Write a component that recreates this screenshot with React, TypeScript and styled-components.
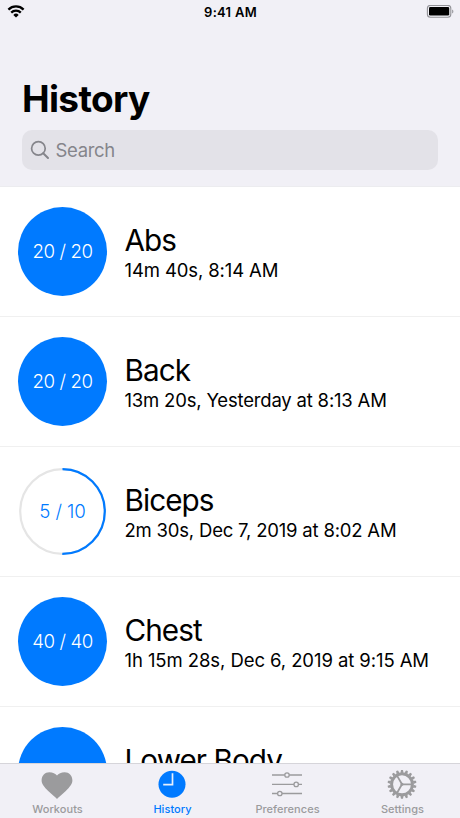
import React from "react";
import styled, { createGlobalStyle } from "styled-components";

const BLUE = "#007aff";
const GREY = "#9b9b9d";

const GlobalStyle = createGlobalStyle`
  * { box-sizing: border-box; }
  body {
    margin: 0;
    background: #fff;
    color: #000;
    font-family: Inter, "Liberation Sans", sans-serif;
    overflow: hidden;
  }
`;

const Screen = styled.div`
  width: 460px;
  height: 818px;
  display: flex;
  flex-direction: column;
  overflow: hidden;
`;

const Header = styled.header`
  flex: none;
  height: 187px;
  background: #f1f0f6;
  border-bottom: 1px solid #ececef;
`;

const StatusBar = styled.div`
  height: 24px;
  padding: 0 6px 0 7px;
  display: grid;
  grid-template-columns: 1fr auto 1fr;
  align-items: center;
  svg { display: block; }
`;

const Clock = styled.span`
  font-size: 13px;
  line-height: 24px;
  font-weight: 600;
  letter-spacing: 0.28px;
`;

const BatterySlot = styled.div`
  display: flex;
  justify-content: flex-end;
`;

const Title = styled.h1`
  margin: 51px 0 0 22px;
  font-size: 37px;
  line-height: 48px;
  font-weight: 700;
  letter-spacing: -0.65px;
`;

const SearchField = styled.div`
  margin: 7px 22px 0;
  height: 40px;
  padding: 0 0 1px 8px;
  border-radius: 10px;
  background: #e3e2e8;
  display: flex;
  align-items: center;
  gap: 5.5px;
  color: #85858b;
  font-size: 18.5px;
  letter-spacing: -0.35px;
`;

const List = styled.main`
  flex: 1;
  min-height: 0;
  overflow: hidden;
`;

const Row = styled.article`
  height: 130px;
  padding-left: 18px;
  border-bottom: 1px solid #f0f0f0;
  display: flex;
  align-items: center;
  gap: 17.5px;
`;

const Badge = styled.div<{ $done: boolean }>`
  flex: none;
  width: 89px;
  height: 89px;
  border-radius: 50%;
  display: grid;
  place-items: center;
  background: ${(p) => (p.$done ? BLUE : "transparent")};
  color: ${(p) => (p.$done ? "#fff" : BLUE)};
  > * { grid-area: 1 / 1; }
`;

const Count = styled.span<{ $tight: boolean }>`
  font-size: 18.7px;
  line-height: 24px;
  margin-top: 1px;
  white-space: nowrap;
  letter-spacing: ${(p) => (p.$tight ? "-0.42px" : "-0.1px")};
  font-weight: 350;
`;

const Details = styled.div`
  white-space: nowrap;
`;

const Name = styled.h2`
  margin: 0;
  font-size: 29.7px;
  line-height: 36px;
  font-weight: 400;
  letter-spacing: -0.95px;
`;

const Meta = styled.p<{ $tracking: number }>`
  margin: 0;
  font-size: 18.5px;
  line-height: 24px;
  letter-spacing: ${(p) => p.$tracking}px;
`;

const TabBar = styled.nav`
  flex: none;
  height: 55px;
  background: #f1f0f6;
  border-top: 1px solid #d6d5da;
  display: grid;
  grid-template-columns: repeat(4, 1fr);
`;

const Tab = styled.div<{ $active?: boolean }>`
  display: flex;
  flex-direction: column;
  align-items: center;
  color: ${(p) => (p.$active ? BLUE : GREY)};
  svg { display: block; margin: 3px 1px 0 0; }
`;

const TabLabel = styled.span`
  font-size: 11px;
  line-height: 14px;
  margin-top: 3px;
  font-weight: 500;
  letter-spacing: 0.04px;
`;

function WifiIcon() {
  return (
    <svg width="18" height="14" viewBox="0 0 18 14">
      <g fill="none" stroke="#000" strokeWidth="2.3">
        <path d="M1.4 4.6a10.8 10.8 0 0 1 15.2 0" />
        <path d="M4.2 7.600a6.800 6.800 0 0 1 9.600 0" />
      </g>
      <path d="M9 12.6 6.3 9.9a3.9 3.9 0 0 1 5.400 0z" />
    </svg>
  );
}

function BatteryIcon() {
  return (
    <svg width="28" height="14" viewBox="0 0 28 14">
      <rect x="1.4" y="0.5" width="23.400" height="11.700" rx="3" fill="none" stroke="#929297" strokeWidth="1.1" />
      <rect x="3" y="2.100" width="20.200" height="8.500" rx="1.3" />
      <path d="M26.200 4.500v4c1.6-.5 1.6-3.5 0-4z" fill="#929297" />
    </svg>
  );
}

function SearchIcon() {
  return (
    <svg width="20" height="20" viewBox="0 0 20 20" fill="none" stroke="#85858b" strokeWidth="1.7">
      <circle cx="8.4" cy="8.4" r="6.8" />
      <path d="m13.2 13.2 4.800 4.800" strokeWidth="2" strokeLinecap="round" />
    </svg>
  );
}

function ProgressRing({ value }: { value: number }) {
  const r = 42.3;
  const length = 2 * Math.PI * r;
  return (
    <svg width="89" height="89" viewBox="0 0 89 89" fill="none" strokeWidth="2.2">
      <circle cx="44.5" cy="44.5" r={r} stroke="#e5e5e5" />
      <circle
        cx="44.5"
        cy="44.5"
        r={r}
        stroke={BLUE}
        strokeDasharray={`${length * value} ${length}`}
        transform="rotate(-90 44.5 44.5)"
      />
    </svg>
  );
}

function HeartIcon() {
  return (
    <svg width="32" height="32" viewBox="0 0 32 32" fill="currentColor">
      <path d="M16 32C14.6 29.9 11 27.600 7.2 23.900C3.300 20.200.600 17.100.600 13.300C.600 8.600 4 5.200 8.300 5.200C11.800 5.200 14.600 6.500 16 8.400C17.400 6.500 20.200 5.200 23.700 5.200C28 5.200 31.400 8.600 31.400 13.300C31.400 17.100 28.700 20.200 24.800 23.900C21 27.600 17.400 29.900 16 32Z" />
    </svg>
  );
}

function ClockIcon() {
  return (
    <svg width="32" height="32" viewBox="0 0 32 32">
      <circle cx="16" cy="17.200" r="13.500" fill="currentColor" />
      <path d="M16.500 6.300V17.700H7.200" fill="none" stroke="#e6effc" strokeWidth="1.700" />
    </svg>
  );
}

function SlidersIcon() {
  const tracks = [
    { y: 8, x: 16 },
    { y: 17.4, x: 25.2 },
    { y: 26.5, x: 8.8 },
  ];
  return (
    <svg width="32" height="32" viewBox="0 0 32 32" fill="none" stroke="currentColor" strokeWidth="1.3">
      {tracks.map((t) => (
        <g key={t.y}>
          <path d={`M1 ${t.y}H${t.x - 2.2}M${t.x + 2.2} ${t.y}H31`} />
          <circle cx={t.x} cy={t.y} r="2.2" />
        </g>
      ))}
    </svg>
  );
}

function GearIcon() {
  const teeth = Array.from({ length: 18 }, (_, i) => i * 20);
  return (
    <svg width="32" height="32" viewBox="0 0 32 32" fill="none" stroke="currentColor">
      <circle cx="16" cy="17.300" r="10.400" strokeWidth="2.900" />
      {teeth.map((a) => (
        <path key={a} d="M14.400 5.900 15 2.900H17L17.600 5.900Z" fill="currentColor" stroke="none" transform={`rotate(${a} 16 17.3)`} />
      ))}
      <path d="M16 17.300H26M16 17.300 11 8.600M16 17.300 11 26" strokeWidth="1.800" />
      <circle cx="16" cy="17.300" r="1.500" fill="currentColor" stroke="none" />
    </svg>
  );
}

const workouts = [
  { name: "Abs", meta: "14m 40s, 8:14 AM", done: 20, total: 20, tracking: -0.12 },
  { name: "Back", meta: "13m 20s, Yesterday at 8:13 AM", done: 20, total: 20, tracking: -0.19 },
  { name: "Biceps", meta: "2m 30s, Dec 7, 2019 at 8:02 AM", done: 5, total: 10, tracking: -0.2 },
  { name: "Chest", meta: "1h 15m 28s, Dec 6, 2019 at 9:15 AM", done: 40, total: 40, tracking: -0.08 },
  { name: "Lower Body", meta: "", done: 0, total: 0, tracking: 0 },
];

const tabs = [
  { label: "Workouts", Icon: HeartIcon },
  { label: "History", Icon: ClockIcon, active: true },
  { label: "Preferences", Icon: SlidersIcon },
  { label: "Settings", Icon: GearIcon },
];

export default function App() {
  return (
    <>
      <GlobalStyle />
      <Screen>
        <Header>
          <StatusBar>
            <WifiIcon />
            <Clock>9:41 AM</Clock>
            <BatterySlot>
              <BatteryIcon />
            </BatterySlot>
          </StatusBar>
          <Title>History</Title>
          <SearchField>
            <SearchIcon />
            Search
          </SearchField>
        </Header>
        <List>
          {workouts.map((w) => (
            <Row key={w.name}>
              <Badge $done={w.done === w.total}>
                {w.done < w.total && <ProgressRing value={w.done / w.total} />}
                {w.total > 0 && (
                  <Count $tight={w.total !== 10}>
                    {w.done} / {w.total}
                  </Count>
                )}
              </Badge>
              <Details>
                <Name>{w.name}</Name>
                <Meta $tracking={w.tracking}>{w.meta || "\u00a0"}</Meta>
              </Details>
            </Row>
          ))}
        </List>
        <TabBar>
          {tabs.map(({ label, Icon, active }) => (
            <Tab key={label} $active={active}>
              <Icon />
              <TabLabel>{label}</TabLabel>
            </Tab>
          ))}
        </TabBar>
      </Screen>
    </>
  );
}
